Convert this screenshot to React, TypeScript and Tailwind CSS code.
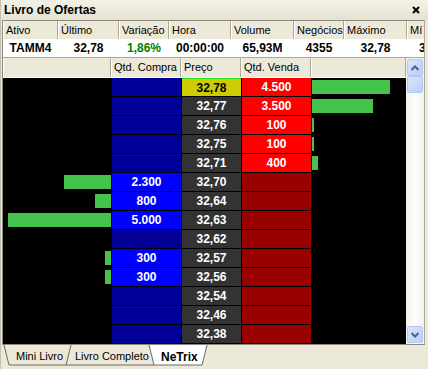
import React from 'react';

type Col = { label: string; w: string; value: string; cls?: string };

const topCols: Col[] = [
  { label: 'Ativo', w: 'w-[55px]', value: 'TAMM4' },
  { label: 'Último', w: 'w-[61px]', value: '32,78' },
  { label: 'Variação', w: 'w-[50px]', value: '1,86%', cls: 'text-[#008000]' },
  { label: 'Hora', w: 'w-[62px]', value: '00:00:00' },
  { label: 'Volume', w: 'w-[63px]', value: '65,93M' },
  { label: 'Negócios', w: 'w-[50px]', value: '4355' },
  { label: 'Máximo', w: 'w-[63px]', value: '32,78' },
];

type Row = { price: string; buy?: string; bw?: number; sell?: string; sw?: number; hl?: boolean };

const rows: Row[] = [
  { price: '32,78', sell: '4.500', sw: 78, hl: true },
  { price: '32,77', sell: '3.500', sw: 61 },
  { price: '32,76', sell: '100', sw: 2 },
  { price: '32,75', sell: '100', sw: 2 },
  { price: '32,71', sell: '400', sw: 6 },
  { price: '32,70', buy: '2.300', bw: 47 },
  { price: '32,64', buy: '800', bw: 16 },
  { price: '32,63', buy: '5.000', bw: 103 },
  { price: '32,62' },
  { price: '32,57', buy: '300', bw: 6 },
  { price: '32,56', buy: '300', bw: 6 },
  { price: '32,54' },
  { price: '32,46' },
  { price: '32,38' },
  { price: '32,37' },
];

const hdr = 'h-full flex items-center pl-[3px] border-r border-[#aca899] shadow-[inset_1px_0_0_#ffffff] overflow-hidden whitespace-nowrap';

function Chevron({ up }: { up?: boolean }) {
  return (
    <svg width="8" height="6" viewBox="0 0 8 6">
      <path d={up ? 'M0.5 5 L4 1.5 L7.5 5' : 'M0.5 1 L4 4.5 L7.5 1'} fill="none" stroke="#4d6185" strokeWidth="2" />
    </svg>
  );
}

function ScrollBtn({ children }: { children?: React.ReactNode }) {
  return (
    <div className="mx-[1px] h-[17px] rounded-[2px] border border-[#b4c8f6] bg-gradient-to-br from-[#dbe6fd] to-[#b9cdfa] flex items-center justify-center">
      {children}
    </div>
  );
}

export default function App() {
  return (
    <div className="w-[428px] h-[369px] overflow-hidden bg-[#ece9d8] border-l border-[#c4c1b2] font-['Liberation_Sans',Arial,sans-serif] text-[11px] text-black select-none">
      {/* title */}
      <div className="h-[20px] flex items-center justify-between pl-[3px] pr-[8px] bg-gradient-to-b from-[#f3f1e6] to-[#e6e2d0]">
        <span className="font-bold text-[12px]">Livro de Ofertas</span>
        <svg width="8" height="8" viewBox="0 0 8 8">
          <path d="M1 1 L7 7 M7 1 L1 7" stroke="#000" strokeWidth="2" />
        </svg>
      </div>

      <div className="ml-[1px] w-[423px] border-t border-l border-r border-[#8c8a80] border-r-[#aca899]">
        {/* top grid */}
        <div className="flex h-[18px] bg-[#ece9d8]">
          {topCols.map((c) => (
            <div key={c.label} className={`${c.w} ${hdr}`}>{c.label}</div>
          ))}
          <div className={`w-[17px] ${hdr} border-r-0`}>Mí</div>
        </div>
        <div className="flex h-[19px] bg-white font-bold text-[12px] border-b border-[#aca899]">
          {topCols.map((c) => (
            <div key={c.label} className={`${c.w} flex items-center justify-center ${c.cls ?? ''}`}>{c.value}</div>
          ))}
          <div className="w-[17px] overflow-hidden pl-[12px] flex items-center">32</div>
        </div>

        {/* lower grid */}
        <div className="flex">
          <div className="w-[403px]">
            <div className="flex h-[20px] border-b border-white">
              <div className={`w-[108px] ${hdr}`} />
              <div className={`w-[70px] ${hdr}`}>Qtd. Compra</div>
              <div className={`w-[60px] ${hdr}`}>Preço</div>
              <div className={`w-[70px] ${hdr}`}>Qtd. Venda</div>
              <div className={`w-[95px] ${hdr}`} />
            </div>
            <div className="h-[266px] overflow-hidden bg-black">
              {rows.map((r) => (
                <div key={r.price} className="flex gap-[1px] h-[19px] bg-black font-bold text-[12px] text-white">
                  <div className="w-[108px] pt-[2px] flex justify-end items-start">
                    {r.bw ? <div className="h-[14px] bg-[#44c44c]" style={{ width: r.bw }} /> : null}
                  </div>
                  <div className={`w-[69px] h-[18px] flex items-center justify-center ${r.buy ? 'bg-[#0000ff]' : 'bg-[#000099]'}`}>
                    {r.buy}
                  </div>
                  <div
                    className={`w-[59px] h-[18px] flex items-center justify-center ${
                      r.hl ? 'bg-[#cccc00] text-black border-t border-[#22e022]' : 'bg-[#333333]'
                    }`}
                  >
                    {r.price}
                  </div>
                  <div className={`w-[69px] h-[18px] flex items-center justify-center ${r.sell ? 'bg-[#ff0000]' : 'bg-[#990000]'}`}>
                    {r.sell}
                  </div>
                  <div className="w-[94px] pt-[2px] flex items-start">
                    {r.sw ? <div className="h-[14px] bg-[#44c44c]" style={{ width: r.sw }} /> : null}
                  </div>
                </div>
              ))}
            </div>
          </div>
          {/* scrollbar */}
          <div className="w-[18px] h-[286px] pt-[1px] pb-[1px] flex flex-col bg-gradient-to-r from-[#f3f1ea] via-[#fdfdfb] to-[#f3f1ea]">
            <ScrollBtn>
              <Chevron up />
            </ScrollBtn>
            <ScrollBtn />
            <div className="flex-1" />
            <ScrollBtn>
              <Chevron />
            </ScrollBtn>
          </div>
        </div>
      </div>

      {/* tabs */}
      <div className="relative h-[22px] ml-[1px] w-[423px] border-t border-[#8c8a80]">
        <svg className="absolute left-0 top-0" width="423" height="22" viewBox="0 0 423 22">
          <path d="M147 0 L152 20 L200 20 L205 0 Z" fill="#ffffff" />
          <path d="M2 0 L7 20 L152 20" fill="none" stroke="#6b6a63" strokeWidth="1" />
          <path d="M64 20 L69 0" fill="none" stroke="#6b6a63" strokeWidth="1" />
          <path d="M147 0 L152 20 L200 20 L205 0" fill="none" stroke="#6b6a63" strokeWidth="1" />
        </svg>
        <div className="relative flex items-center h-[20px] pt-[3px] pl-[14px]">
          <span className="w-[59px]">Mini Livro</span>
          <span className="w-[86px]">Livro Completo</span>
          <span className="font-bold text-[12px]">NeTrix</span>
        </div>
      </div>
    </div>
  );
}
